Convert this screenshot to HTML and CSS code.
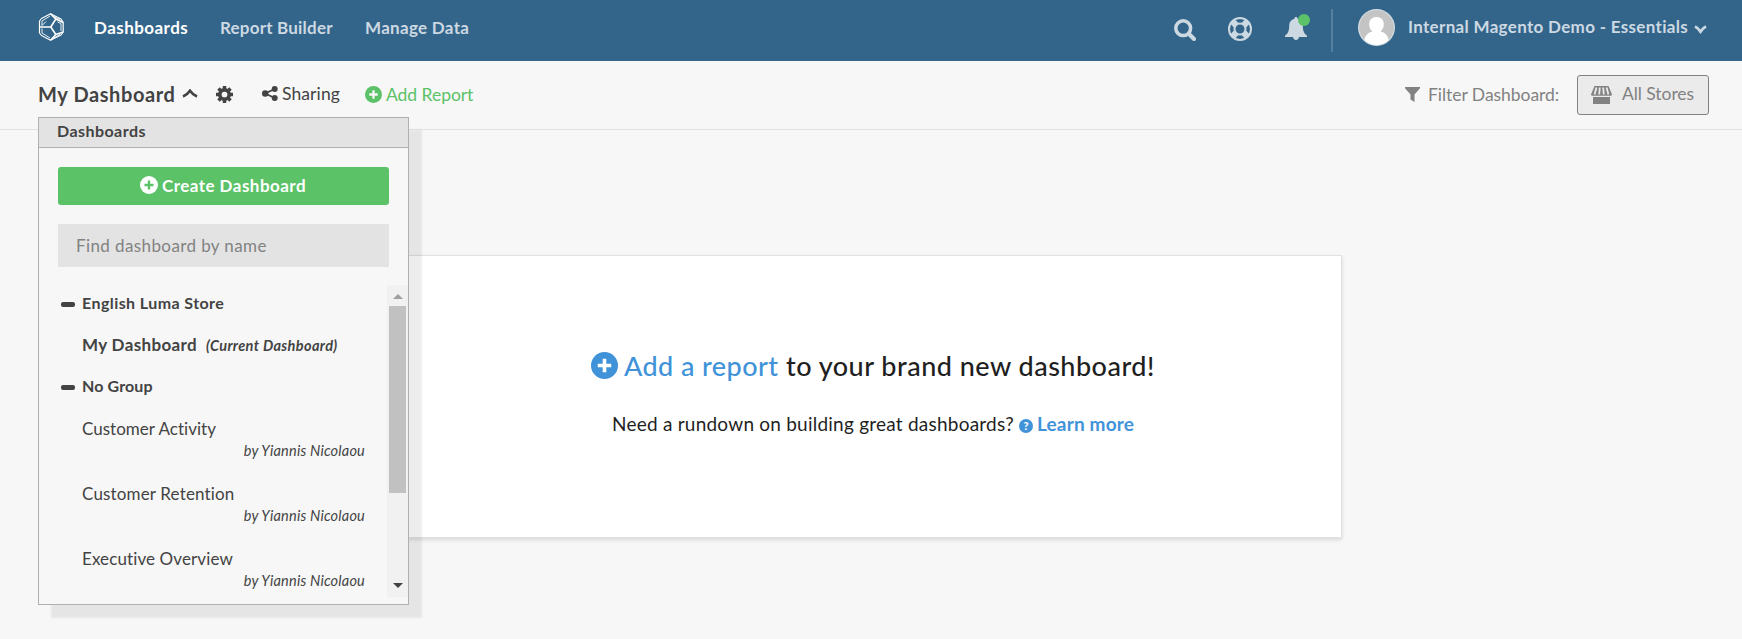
FILE: index.html
```html
<!DOCTYPE html>
<html lang="en">
<head>
<meta charset="utf-8">
<title>My Dashboard</title>
<link rel="stylesheet" href="styles.css">
</head>
<body>
<svg class="defs" width="0" height="0">
  <symbol id="plus-circle" viewBox="0 0 18 18"><circle cx="9" cy="9" r="9" fill="currentColor"/><path class="plus" d="M9 4.500v9M4.500 9h9"/></symbol>
</svg>
<header class="topbar">
  <svg class="logo" viewBox="0 0 26 28" fill="none" stroke="#fff" stroke-linejoin="round">
    <path stroke-width="1.200" d="M12.500 .8 23 6 25.200 9.500V19L23 22 12.500 27.200 3.500 22.500 1.500 20V8L3.500 5.500z"/>
    <path stroke-width="1.600" d="M1.500 14H12.800L17.800 6 12.500 .8M17.800 6 25.200 9.500M12.800 14 17.800 21.500 25.200 19M17.800 21.500 12.500 27.200"/>
    <path stroke-width=".9" d="M4 12.500V8L12 3M4 15.500V20l8 5M19.500 9l3.500 1.500V18M14.500 3.200 22 6.500M15.500 25 22 21.500M8 8.500 4 12.500"/>
  </svg>
  <nav class="nav">
    <a class="nav-item nav-dash active">Dashboards</a>
    <a class="nav-item nav-report">Report Builder</a>
    <a class="nav-item nav-data">Manage Data</a>
  </nav>
  <div class="tools">
    <svg class="search" viewBox="0 0 22 22" fill="none" stroke="currentColor"><circle cx="9.200" cy="9.200" r="7.400" stroke-width="3.500"/><path d="M15 15l5 5" stroke-width="4" stroke-linecap="round"/></svg>
    <svg class="help" viewBox="0 0 24 24" fill="none" stroke="currentColor"><circle cx="12" cy="12" r="11" stroke-width="2"/><circle cx="12" cy="12" r="5.500" stroke-width="2"/><path stroke-width="6.400" d="M4.600 4.600l3.600 3.600M19.400 4.600l-3.600 3.600M4.600 19.400l3.600-3.600M19.400 19.400l-3.600-3.600"/></svg>
    <div class="bell-wrap">
      <svg class="bell" viewBox="0 0 22 23" fill="currentColor"><path d="M11 0c1 0 1.600.7 1.600 1.700C16 2.500 17.800 5 17.800 8.500c0 5.500 1.200 8 4.200 10.200V20H0v-1.300C3 16.500 4.200 14 4.200 8.500c0-3.500 1.800-6 5.200-6.800C9.400.7 10 0 11 0zM8 19.500h6c0 2-1.300 3.500-3 3.500s-3-1.500-3-3.500z"/></svg>
      <span class="badge"></span>
    </div>
    <span class="divider"></span>
    <svg class="avatar" viewBox="0 0 37 37"><defs><clipPath id="face"><circle cx="18.500" cy="18.500" r="17.500"/></clipPath></defs><circle cx="18.500" cy="18.500" r="18.500" fill="#d3dce3"/><circle cx="18.500" cy="18.500" r="17.300" fill="#c4c4c4"/><g clip-path="url(#face)" fill="#fff"><path d="M18.500 8c4.700 0 7.300 3 7.300 7.300 0 3-1.200 5.700-3.300 7.200 4.500 1 7.500 4 8 8V37h-24v-6.500c.5-4 3.500-7 8-8-2.100-1.500-3.300-4.200-3.300-7.200C11.200 11 13.800 8 18.500 8z"/></g></svg>
    <span class="account">Internal Magento Demo - Essentials</span>
    <svg class="chev" viewBox="0 0 13 9" fill="none" stroke="currentColor" stroke-width="2.800"><path d="M1 1.600Q4 3 6.500 6.600 9 3 12 1.600"/></svg>
  </div>
</header>

<div class="subbar">
  <h1 class="title">My Dashboard</h1>
  <svg class="caret" viewBox="0 0 16 9" fill="none" stroke="currentColor" stroke-width="2.700"><path d="M1 7.600Q5 6 8 1.800 11 6 15 7.600"/></svg>
  <svg class="gear" viewBox="0 0 16 16" fill="none" stroke="currentColor"><circle cx="8" cy="8" r="4.400" stroke-width="3.400"/><path stroke-width="3.300" d="M8 0v3M8 13v3M0 8h3M13 8h3M2.350 2.350l2.100 2.100M11.550 11.550l2.100 2.100M2.350 13.650l2.100-2.100M11.550 4.450l2.100-2.100"/></svg>
  <svg class="share" viewBox="0 0 16 15" fill="currentColor"><circle cx="3.200" cy="7.500" r="3.200"/><circle cx="12.700" cy="3" r="3"/><circle cx="12.700" cy="12" r="3"/><path d="M12.700 3 3.200 7.500l9.500 4.500" fill="none" stroke="currentColor" stroke-width="1.900"/></svg>
  <a class="sharing">Sharing</a>
  <svg class="add-icon"><use href="#plus-circle"/></svg>
  <a class="add">Add Report</a>
  <div class="filters">
    <svg class="funnel" viewBox="0 0 15 15" fill="currentColor"><path d="M0 0h15v1.300L9.500 7.500V15L5.500 12.500v-5L0 1.300z"/></svg>
    <span class="filter-label">Filter Dashboard:</span>
    <button class="stores">
      <svg class="shop" viewBox="0 0 21 18"><path fill="currentColor" d="M2 11h17v7H2z"/><path fill="currentColor" d="M3.500 0h14L21 8.500c0 1-.8 1.300-1.800 1.300H1.800C.8 9.800 0 9.500 0 8.500z"/><path d="M5.400 1.500 3.600 8.500M8.800 1.500 8.200 8.500M12.200 1.500 12.800 8.500M15.600 1.500 17.400 8.500" stroke="#ebebeb" stroke-width="1.800"/></svg>
      <span>All Stores</span>
    </button>
  </div>
</div>

<main class="content">
  <section class="card">
    <p class="headline"><svg class="big-icon"><use href="#plus-circle"/></svg><a class="lead-link">Add a report</a><span>to your brand new dashboard!</span></p>
    <p class="hint"><span>Need a rundown on building great dashboards?</span><span class="q">?</span><a class="learn">Learn more</a></p>
  </section>
</main>

<aside class="panel">
  <div class="panel-head">Dashboards</div>
  <button class="create"><svg class="create-icon"><use href="#plus-circle"/></svg><span>Create Dashboard</span></button>
  <input class="find" type="text" placeholder="Find dashboard by name">
  <div class="scroller">
    <div class="list">
      <div class="group luma"><span class="minus"></span>English Luma Store</div>
      <div class="current"><span class="current-name">My Dashboard</span><em class="current-tag">(Current Dashboard)</em></div>
      <div class="group nogroup"><span class="minus"></span>No Group</div>
      <div class="entry activity"><span>Customer Activity</span><em>by Yiannis Nicolaou</em></div>
      <div class="entry retention"><span>Customer Retention</span><em>by Yiannis Nicolaou</em></div>
      <div class="entry overview"><span>Executive Overview</span><em>by Yiannis Nicolaou</em></div>
    </div>
    <div class="bar"><span class="up"></span><span class="thumb"></span><span class="down"></span></div>
  </div>
</aside>
</body>
</html>
```
FILE: styles.css
```css
* { box-sizing: border-box; }
body { --plus: #f7f7f7; margin: 0; height: 639px; overflow: hidden; position: relative; background: #f7f7f7; color: #434343; font-family: Lato, "Liberation Sans", sans-serif; font-variant-ligatures: none; }
svg { display: block; flex: none; }
span, a, em { white-space: nowrap; }
p, h1 { margin: 0; }
.defs { position: absolute; }
.plus { fill: none; stroke: var(--plus); stroke-width: 2.4; }

.topbar { display: flex; align-items: flex-start; height: 61px; padding: 0 35px 0 38px; background: #33658a; color: #ccd8e2; font-weight: 700; font-size: 17px; line-height: 20px; }
.logo { width: 26px; height: 28px; margin-top: 13px; }
.nav { display: flex; margin: 18px 0 0 30px; }
.nav-dash { width: 126px; letter-spacing: .45px; }
.nav-report { width: 145px; letter-spacing: .2px; }
.nav-data { letter-spacing: .3px; }
.active { color: #fff; }
.tools { display: flex; margin-left: auto; }
.search { width: 22px; height: 22px; margin: 19px 32px 0 0; }
.help { width: 24px; height: 24px; margin: 17px 33px 0 0; }
.bell-wrap { position: relative; width: 22px; margin: 17px 24px 0 0; }
.bell { width: 22px; height: 23px; }
.badge { position: absolute; left: 13px; top: -3px; width: 12px; height: 12px; border-radius: 50%; background: #5bc267; }
.divider { width: 2px; height: 43px; margin: 9px 25px 0 0; background: #557f9e; }
.avatar { width: 37px; height: 37px; margin: 9px 13px 0 0; }
.account { width: 286px; margin-top: 17px; letter-spacing: .32px; }
.chev { width: 13px; height: 9px; margin-top: 25px; }

.subbar { display: flex; align-items: flex-start; height: 69px; padding: 0 33px 0 38px; border-bottom: 1px solid #e1e1e1; font-size: 17.5px; line-height: 20px; }
.title { width: 144px; margin-top: 22px; font-size: 20px; line-height: 22px; letter-spacing: .6px; white-space: nowrap; }
.caret { width: 16px; height: 9px; margin: 28px 18px 0 0; }
.gear { width: 17px; height: 17px; margin: 25px 29px 0 0; }
.share { width: 16px; height: 15px; margin: 25px 4px 0 0; }
.sharing { width: 83px; margin-top: 23px; letter-spacing: .1px; }
.add-icon { width: 17px; height: 17px; margin: 25px 4px 0 0; color: #5bc267; }
.add { margin-top: 24px; letter-spacing: -.04px; color: #5bc267; }
.filters { display: flex; margin-left: auto; color: #828282; }
.funnel { width: 15px; height: 15px; margin: 26px 8px 0 0; }
.filter-label { width: 149px; margin-top: 24px; letter-spacing: -.04px; }
.stores { display: flex; width: 132px; height: 40px; margin-top: 14px; padding: 10px 0 0 13px; gap: 10px; border: 1px solid #828282; border-radius: 3px; background: #ebebeb; color: #828282; font: 17.5px/20px Lato, sans-serif; letter-spacing: -.06px; }
.stores span { margin-top: -2px; }
.shop { width: 21px; height: 18px; }

.content { padding: 125px 0 0 400px; }
.card { width: 942px; height: 283px; padding: 94px 0 0 191px; border: 1px solid #e1e1e1; background: #fff; box-shadow: 0 2px 4px rgba(0, 0, 0, .12); color: #1f1f1f; }
.headline { display: flex; font-size: 27px; line-height: 32px; font-weight: 500; letter-spacing: .49px; }
.big-icon { --plus: #fff; width: 27px; height: 27px; margin: 2px 6px 0 -1px; color: #4193d9; }
.lead-link { width: 162px; letter-spacing: .41px; color: #4193d9; }
.hint { display: flex; margin: 30px 0 0 20px; font-size: 19px; line-height: 24px; letter-spacing: .23px; }
.q { width: 14px; height: 14px; margin: 7px 4px 0 5px; border-radius: 50%; background: #4193d9; color: #fff; font-size: 11px; line-height: 14px; font-weight: 900; letter-spacing: 0; text-align: center; }
.learn { font-weight: 700; letter-spacing: .18px; color: #4193d9; }

.panel { position: absolute; left: 38px; top: 117px; width: 371px; height: 488px; border: 1px solid #b0b0b0; background: #f7f7f7; box-shadow: 13px 13px 2px rgba(0, 0, 0, .07); }
.panel-head { height: 30px; padding: 3px 0 0 18px; border-bottom: 1px solid #b0b0b0; background: #e3e3e3; font-weight: 700; font-size: 16px; line-height: 20px; letter-spacing: .45px; }
.create { --plus: #5bc267; display: flex; justify-content: center; gap: 4px; width: 331px; height: 38px; margin: 19px 0 0 19px; padding: 9px 1px 0 0; border: 0; border-radius: 3px; background: #5bc267; color: #fff; font: 700 17px/20px Lato, sans-serif; letter-spacing: .47px; }
.create-icon { width: 18px; height: 18px; }
.find { display: block; width: 331px; height: 43px; margin: 19px 0 0 19px; padding: 0 18px 1px; border: 0; border-radius: 1px; background: #e3e3e3; font: 17px/20px Lato, sans-serif; letter-spacing: .4px; }
.find::placeholder { color: #828282; opacity: 1; }
.scroller { display: flex; height: 312px; margin-top: 18px; overflow: hidden; }
.list { width: 348px; padding-top: 8px; }
.group { display: flex; align-items: center; padding-left: 22px; font-weight: 700; font-size: 16px; line-height: 20px; }
.luma { letter-spacing: .42px; }
.minus { width: 14px; height: 5px; margin: 3px 7px 0 0; border-radius: 2px; background: #434343; }
.current { display: flex; height: 20px; margin-top: 22px; padding-left: 43px; font-weight: 700; font-size: 17px; line-height: 20px; }
.current-name { width: 124px; letter-spacing: .35px; }
.current-tag { margin-top: 1px; font-size: 14.5px; letter-spacing: .36px; }
.nogroup { margin-top: 21px; letter-spacing: .12px; }
.entry { display: flex; flex-direction: column; height: 65px; padding: 23px 22px 0 43px; font-size: 17px; line-height: 20px; }
.entry em { align-self: flex-end; margin-top: 3px; font-size: 14.5px; line-height: 18px; letter-spacing: .2px; }
.activity span { letter-spacing: .02px; }
.retention span { letter-spacing: .16px; }
.overview span { letter-spacing: .11px; }
.bar { display: flex; flex-direction: column; align-items: flex-start; width: 21px; padding: 9px 0 9px 2px; background: #f1f1f1; }
.up, .down { margin-left: 4px; border: solid transparent; border-width: 0 5px; }
.up { border-bottom: 5px solid #a0a0a0; }
.thumb { width: 17px; height: 187px; margin-top: 7px; background: #c1c1c1; }
.down { margin-top: auto; border-top: 5px solid #434343; }
```
